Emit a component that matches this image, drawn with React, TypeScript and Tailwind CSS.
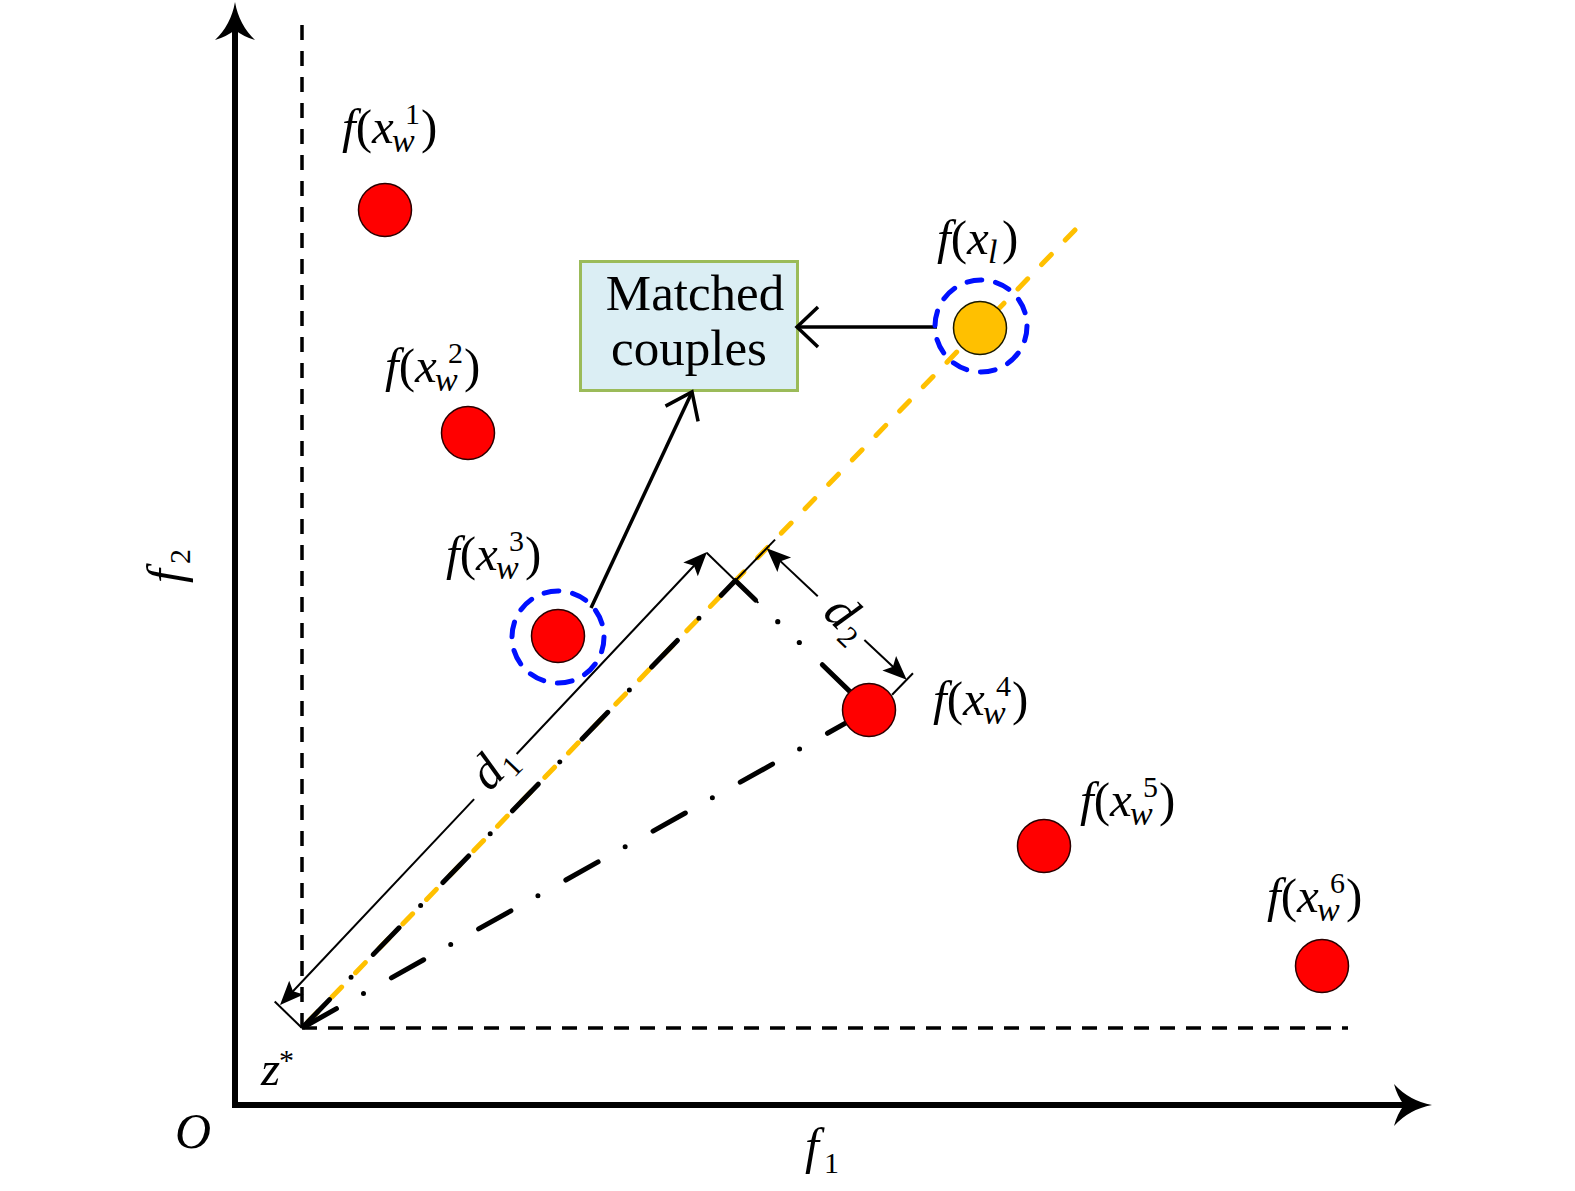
import React from "react";

type P = [number, number];
const FONT = "'Liberation Serif', 'Times New Roman', serif";

const add = (a: P, b: P): P => [a[0] + b[0], a[1] + b[1]];
const mul = (a: P, k: number): P => [a[0] * k, a[1] * k];
const sub = (a: P, b: P): P => [a[0] - b[0], a[1] - b[1]];
const norm = (a: P): P => {
  const l = Math.hypot(a[0], a[1]);
  return [a[0] / l, a[1] / l];
};
const pt = (a: P) => `${a[0].toFixed(1)},${a[1].toFixed(1)}`;

function head(tip: P, d: P, len: number, hw: number, notch: number): string {
  const p: P = [-d[1], d[0]];
  const base = add(tip, mul(d, -len));
  const w1 = add(base, mul(p, hw));
  const w2 = add(base, mul(p, -hw));
  const n = add(tip, mul(d, -(len - notch)));
  return `M${pt(tip)} L${pt(w1)} L${pt(n)} L${pt(w2)} Z`;
}

function curvedHead(tip: P, d: P, len: number, hw: number, notch: number): string {
  const p: P = [-d[1], d[0]];
  const base = add(tip, mul(d, -len));
  const w1 = add(base, mul(p, hw));
  const w2 = add(base, mul(p, -hw));
  const n = add(tip, mul(d, -(len - notch)));
  const c1 = add(add(tip, mul(d, -0.6 * len)), mul(p, 0.2 * hw));
  const c2 = add(add(tip, mul(d, -0.6 * len)), mul(p, -0.2 * hw));
  const nc1 = add(add(tip, mul(d, -(len - notch * 0.3))), mul(p, hw * 0.45));
  const nc2 = add(add(tip, mul(d, -(len - notch * 0.3))), mul(p, -hw * 0.45));
  return `M${pt(tip)} Q${pt(c1)} ${pt(w1)} Q${pt(nc1)} ${pt(n)} Q${pt(nc2)} ${pt(w2)} Q${pt(c2)} ${pt(tip)} Z`;
}

// geometry
const Z: P = [302, 1028];
const TOP: P = [1075, 230];
const U = norm(sub(TOP, Z)); // along yellow line (up-right)
const N: P = [U[1], -U[0]]; // perpendicular, up-left
const V: P = [-U[1], U[0]]; // perpendicular, down-right
const P4: P = [869, 710];
const footS = (P4[0] - Z[0]) * U[0] + (P4[1] - Z[1]) * U[1];
const FOOT = add(Z, mul(U, footS));

const reds: P[] = [
  [385, 210],
  [468, 433],
  [558, 636],
  P4,
  [1044, 846],
  [1322, 966],
];

function WLabel({ fx, bl, n }: { fx: number; bl: number; n: string }) {
  const ox = fx + 5;
  return (
    <text fontFamily={FONT} fill="#000" fontSize={49}>
      <tspan x={ox} y={bl} fontStyle="italic">
        f
      </tspan>
      <tspan>(</tspan>
      <tspan fontStyle="italic">x</tspan>
      <tspan x={ox + 50} y={bl + 9} fontSize={34} fontStyle="italic">
        w
      </tspan>
      <tspan x={ox + 63} y={bl - 19} fontSize={30}>
        {n}
      </tspan>
      <tspan x={ox + 79} y={bl}>
        )
      </tspan>
    </text>
  );
}

function Seg({ a, b, w = 2 }: { a: P; b: P; w?: number }) {
  return <line x1={a[0]} y1={a[1]} x2={b[0]} y2={b[1]} stroke="#000" strokeWidth={w} />;
}

export default function App() {
  // d1 dimension
  const d1P: P = [280, 1005];
  const d1T: P = [707, 552];
  const d1dir = norm(sub(d1T, d1P));
  const d1len = Math.hypot(d1T[0] - d1P[0], d1T[1] - d1P[1]);
  // d2 dimension
  const d2A: P = add(FOOT, mul(U, 45));
  const p4off = add(P4, mul(V, 6));
  const d2B: P = add(p4off, mul(U, 48));
  const d2dir = norm(sub(d2B, d2A));
  const d2len = Math.hypot(d2B[0] - d2A[0], d2B[1] - d2A[1]);

  // perpendicular dash-dot-dot from foot to p4
  const vdir = norm(sub(P4, FOOT));
  const at = (s: number): P => add(FOOT, mul(vdir, s));

  // p3 -> box
  const c3a: P = [591, 608];
  const c3t: P = [692, 392];
  const c3d = norm(sub(c3t, c3a));
  const c3p: P = [-c3d[1], c3d[0]];
  const c3base = add(c3t, mul(c3d, -24));
  const c3w1 = add(c3base, mul(c3p, 18));
  const c3w2 = add(c3base, mul(c3p, -18));

  return (
    <div className="relative w-[1575px] h-[1191px] bg-white overflow-hidden">
      {/* Matched couples box */}
      <div className="absolute left-[579px] top-[260px] w-[220px] h-[132px] border-[3px] border-[#9BBB59] bg-[#DBEEF4] flex flex-col items-center pt-[3px] font-['Liberation_Serif','Times_New_Roman',serif] text-[51px] leading-[55px] text-black">
        <span className="pl-[12px]">Matched</span>
        <span>couples</span>
      </div>

      <svg
        className="absolute left-0 top-0 pointer-events-none"
        width={1575}
        height={1191}
        viewBox="0 0 1575 1191"
      >
        {/* axes */}
        <path d="M235,30 L235,1105 L1410,1105" fill="none" stroke="#000" strokeWidth={6} strokeLinejoin="miter" />
        <path d={curvedHead([235, 2], [0, -1], 38, 20, 10)} fill="#000" />
        <path d={curvedHead([1432, 1105], [1, 0], 38, 21, 10)} fill="#000" />

        {/* dashed guides */}
        <line x1={302} y1={25} x2={302} y2={1028} stroke="#000" strokeWidth={3.5} strokeDasharray="15 11" />
        <line x1={302} y1={1028} x2={1348} y2={1028} stroke="#000" strokeWidth={3.5} strokeDasharray="15 11" />

        {/* yellow dashed line */}
        <line
          x1={TOP[0]}
          y1={TOP[1]}
          x2={Z[0]}
          y2={Z[1]}
          stroke="#FFC000"
          strokeWidth={5}
          strokeDasharray="14 20"
          strokeLinecap="round"
        />

        {/* black dash-dot along yellow line, z* -> foot */}
        <line
          x1={Z[0]}
          y1={Z[1]}
          x2={FOOT[0]}
          y2={FOOT[1]}
          stroke="#000"
          strokeWidth={5}
          strokeDasharray="37 31 0 32"
          strokeDashoffset={-2.5}
          strokeLinecap="round"
        />
        {/* black dash-dot z* -> p4 */}
        <line
          x1={Z[0]}
          y1={Z[1]}
          x2={P4[0]}
          y2={P4[1]}
          stroke="#000"
          strokeWidth={5}
          strokeDasharray="37 31 0 32"
          strokeDashoffset={-2.5}
          strokeLinecap="round"
        />
        {/* foot -> p4 dash-dot-dot */}
        <line x1={at(2)[0]} y1={at(2)[1]} x2={at(28)[0]} y2={at(28)[1]} stroke="#000" strokeWidth={5} strokeLinecap="round" />
        <circle cx={at(59)[0]} cy={at(59)[1]} r={2.6} fill="#000" />
        <circle cx={at(89)[0]} cy={at(89)[1]} r={2.6} fill="#000" />
        <line x1={at(121)[0]} y1={at(121)[1]} x2={at(170)[0]} y2={at(170)[1]} stroke="#000" strokeWidth={5} strokeLinecap="round" />

        {/* extension lines */}
        <Seg a={Z} b={add(Z, mul(N, 38))} />
        <Seg a={add(FOOT, mul(N, 40))} b={add(FOOT, mul(N, -32))} />
        <Seg a={FOOT} b={add(FOOT, mul(U, 57))} />
        <Seg a={add(p4off, mul(U, 27))} b={add(p4off, mul(U, 57))} />

        {/* d1 dimension */}
        <Seg a={add(d1P, mul(d1dir, 10))} b={add(d1P, mul(d1dir, 283))} />
        <Seg a={add(d1P, mul(d1dir, 345))} b={add(d1P, mul(d1dir, d1len - 10))} />
        <path d={head(d1T, d1dir, 24, 10, 5)} fill="#000" />
        <path d={head(d1P, mul(d1dir, -1), 24, 10, 5)} fill="#000" />
        <text
          transform="translate(489.5 792.4) rotate(-46)"
          fontFamily={FONT}
          fontSize={50}
          fill="#000"
        >
          <tspan fontStyle="italic">d</tspan>
          <tspan dx={2} dy={8} fontSize={30}>
            1
          </tspan>
        </text>

        {/* d2 dimension */}
        <Seg a={add(d2A, mul(d2dir, 10))} b={add(d2A, mul(d2dir, 70))} />
        <Seg a={add(d2A, mul(d2dir, 134))} b={add(d2A, mul(d2dir, d2len - 10))} />
        <path d={head(d2A, mul(d2dir, -1), 24, 10, 5)} fill="#000" />
        <path d={head(d2B, d2dir, 24, 10, 5)} fill="#000" />
        <text
          transform="translate(821.6 614.5) rotate(44)"
          fontFamily={FONT}
          fontSize={50}
          fill="#000"
        >
          <tspan fontStyle="italic">d</tspan>
          <tspan dx={2} dy={8} fontSize={30}>
            2
          </tspan>
        </text>

        {/* connectors to box */}
        <line x1={937} y1={327} x2={798} y2={327} stroke="#000" strokeWidth={3.5} />
        <path d="M818,307 L797,327 L818,347" fill="none" stroke="#000" strokeWidth={3.5} />
        <line x1={c3a[0]} y1={c3a[1]} x2={c3t[0]} y2={c3t[1]} stroke="#000" strokeWidth={3.5} />
        <path d={`M${pt(c3w1)} L${pt(c3t)} L${pt(c3w2)}`} fill="none" stroke="#000" strokeWidth={3.5} />

        {/* blue dashed rings */}
        <circle cx={558} cy={637} r={46} fill="none" stroke="#0010FF" strokeWidth={5} strokeDasharray="15 13.9" strokeLinecap="round" />
        <circle cx={981} cy={326} r={46} fill="none" stroke="#0010FF" strokeWidth={5} strokeDasharray="15 13.9" strokeLinecap="round" />

        {/* points */}
        {reds.map((c, i) => (
          <circle key={i} cx={c[0]} cy={c[1]} r={26.5} fill="#FF0000" stroke="#2a0000" strokeWidth={1.5} />
        ))}
        <circle cx={980} cy={328} r={26.5} fill="#FFC000" stroke="#1a1a00" strokeWidth={1.5} />

        {/* point labels */}
        <WLabel fx={337} bl={143} n="1" />
        <WLabel fx={380} bl={382} n="2" />
        <WLabel fx={441} bl={570} n="3" />
        <WLabel fx={928} bl={715} n="4" />
        <WLabel fx={1075} bl={816} n="5" />
        <WLabel fx={1262} bl={912} n="6" />
        <text fontFamily={FONT} fill="#000" fontSize={49}>
          <tspan x={937} y={254} fontStyle="italic">
            f
          </tspan>
          <tspan>(</tspan>
          <tspan fontStyle="italic">x</tspan>
          <tspan x={988} y={263} fontSize={34} fontStyle="italic">
            l
          </tspan>
          <tspan x={1002} y={254}>
            )
          </tspan>
        </text>

        {/* axis labels */}
        <g fontFamily={FONT} fill="#000">
          <text x={805} y={1163} fontSize={50}>
            <tspan fontStyle="italic">f</tspan>
            <tspan dx={5} dy={10} fontSize={30}>
              1
            </tspan>
          </text>
          <text transform="translate(182 583) rotate(-90)" fontSize={50}>
            <tspan fontStyle="italic">f</tspan>
            <tspan dx={5} dy={8} fontSize={30}>
              2
            </tspan>
          </text>
          <text x={175} y={1148} fontSize={50} fontStyle="italic">
            O
          </text>
          <text x={261} y={1085} fontSize={49}>
            <tspan fontStyle="italic">z</tspan>
            <tspan x={279} y={1070} fontSize={30}>
              *
            </tspan>
          </text>
        </g>
      </svg>
    </div>
  );
}
